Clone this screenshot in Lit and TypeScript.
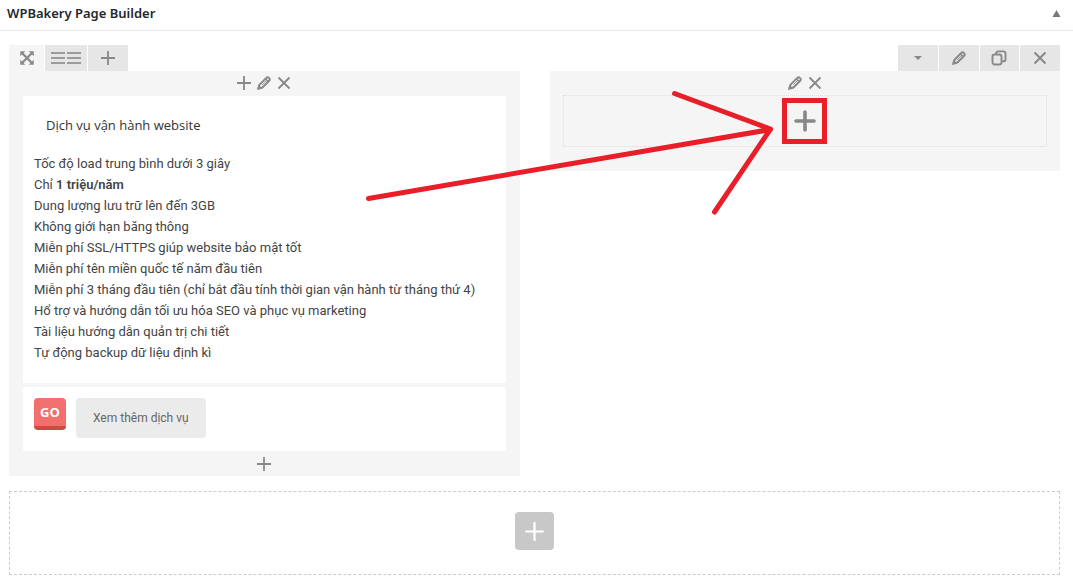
import { LitElement, html, css, svg } from "lit";
import { customElement } from "lit/decorators.js";

const plus = (size: number, stroke: number) => html`
  <svg width=${size} height=${size} viewBox="0 0 16 16" aria-hidden="true">
    <path d="M8 1v14M1 8h14" fill="none" stroke="currentColor" stroke-width=${stroke} />
  </svg>`;

const pencil = html`
  <svg width="16" height="16" viewBox="0 0 16 16" aria-hidden="true">
    <path d="M2.600 13.200l1-3.600L10.300 2.900a1.700 1.700 0 0 1 2.500 0l.4.4a1.700 1.700 0 0 1 0 2.500L6.400 12.500z" fill="none" stroke="currentColor" stroke-width="2" stroke-linejoin="round" />
    <path d="M6.200 9.800l4-4" stroke="currentColor" stroke-width="0.800" />
    <path d="M1 15l1.300-5.200 3.900 3.900z" fill="currentColor" />
    <path d="M9.300 3.700l3.200 3.200" stroke="currentColor" stroke-width="1.600" />
  </svg>`;

const cross = (size: number, stroke: number) => html`
  <svg width=${size} height=${size} viewBox="0 0 14 14" aria-hidden="true">
    <path d="M1.5 1.5l11 11M12.5 1.5l-11 11" fill="none" stroke="currentColor" stroke-width=${stroke} />
  </svg>`;

const move = html`
  <svg width="14" height="14" viewBox="0 0 14 14" aria-hidden="true">
    <path d="M2.500 2.500l9 9M11.500 2.500l-9 9" stroke="currentColor" stroke-width="2.200" />
    <path d="M.3.3h5L.3 5.300zM13.700.3v5l-5-5zM.3 13.700v-5l5 5zM13.700 13.700h-5l5-5z" fill="currentColor" />
  </svg>`;

const copy = html`
  <svg width="16" height="16" viewBox="0 0 16 16" fill="none" stroke="currentColor" stroke-width="1.9" aria-hidden="true">
    <rect x="1.500" y="4.500" width="9" height="10" rx="2.200" />
    <path d="M5.300 4V3.200A1.800 1.800 0 0 1 7.100 1.400H12.500A2 2 0 0 1 14.500 3.400V9.400A1.900 1.900 0 0 1 12.600 11.300H11" />
  </svg>`;

const layout = html`
  <svg width="30" height="14" viewBox="0 0 30 14" aria-hidden="true">
    ${[2, 7, 12].map((y) => svg`<path d="M0 ${y}h14M16 ${y}h14" stroke="#9b9b9b" stroke-width="1.800" />`)}
  </svg>`;

const features = [
  html`Tốc độ load trung bình dưới 3 giây`,
  html`Chỉ <strong>1 triệu/năm</strong>`,
  html`Dung lượng lưu trữ lên đến 3GB`,
  html`Không giới hạn băng thông`,
  html`Miễn phí SSL/HTTPS giúp website bảo mật tốt`,
  html`Miễn phí tên miền quốc tế năm đầu tiên`,
  html`Miễn phí 3 tháng đầu tiên (chỉ bắt đầu tính thời gian vận hành từ tháng thứ 4)`,
  html`Hổ trợ và hướng dẫn tối ưu hóa SEO và phục vụ marketing`,
  html`Tài liệu hướng dẫn quản trị chi tiết`,
  html`Tự động backup dữ liệu định kì`,
];

@customElement("app-root")
export class AppRoot extends LitElement {
  static styles = css`
    :host {
      display: block;
      background: #fff;
      color: #444;
      font: 13px/21px "Open Sans", "Noto Sans", sans-serif;
    }
    * { box-sizing: border-box; }
    button {
      display: flex;
      align-items: center;
      justify-content: center;
      margin: 0;
      padding: 0;
      border: 0;
      background: none;
      color: #888;
      font: inherit;
      cursor: pointer;
    }
    svg { display: block; flex: none; }
    .header {
      display: flex;
      align-items: center;
      justify-content: space-between;
      height: 31px;
      padding: 0 12px 4px 7px;
      border-bottom: 1px solid #e8e8e8;
    }
    .title {
      margin: 0;
      color: #23282d;
      font-family: "Noto Sans", sans-serif;
      font-size: 13px;
      font-weight: 600;
    }
    .toggle { color: #72777c; }
    .content { padding: 14px 13px 7px 9px; }
    .toolbar { display: flex; justify-content: space-between; height: 26px; }
    .tools { display: grid; gap: 1px; }
    .tools-left { grid-template-columns: 35px 42px 40px; }
    .tools-right { grid-template-columns: repeat(4, 1fr); width: 162px; }
    .tool { background: #e6e6e6; }
    .tool-flat { background: #f5f5f5; }
    .columns {
      display: grid;
      grid-template-columns: 1fr 1fr;
      align-items: start;
      gap: 30px;
    }
    .column { padding: 0 14px; background: #f5f5f5; }
    .controls {
      display: flex;
      align-items: center;
      justify-content: center;
      gap: 4px;
      height: 24px;
    }
    .controls-end { height: 25px; }
    .controls button { width: 16px; height: 16px; }
    .card { border-radius: 2px; background: #fff; }
    .text-card { margin-top: 1px; padding: 18px 11px 20px; }
    .card-title {
      margin: 0 12px 17px;
      color: #333;
      font-size: 13px;
      font-weight: 400;
      line-height: 22px;
    }
    .features {
      margin: 0;
      padding: 0;
      font-family: Roboto, "Noto Sans", sans-serif;
      list-style: none;
    }
    .features strong { font-weight: 600; }
    .button-card {
      display: flex;
      gap: 10px;
      margin-top: 4px;
      padding: 11px 11px 13px;
    }
    .go {
      width: 32px;
      height: 32px;
      border-radius: 4px;
      border-bottom: 4px solid #cf4944;
      background: #f1706d;
      color: #fff;
      font: 700 13px/28px "Open Sans", sans-serif;
      text-align: center;
    }
    .more {
      height: 40px;
      padding: 0 17px;
      border-radius: 4px;
      background: #ebebeb;
      color: #666;
      font-family: Roboto, "Noto Sans", sans-serif;
      font-size: 12px;
    }
    .empty-column { padding: 0 13px 24px; }
    .dropzone {
      position: relative;
      display: flex;
      align-items: center;
      justify-content: center;
      height: 52px;
      border: 1px dotted #ddd;
    }
    .annotation {
      position: absolute;
      top: -11px;
      left: calc(50% - 445px);
      pointer-events: none;
    }
    .add-row {
      display: flex;
      align-items: center;
      justify-content: center;
      height: 84px;
      margin-top: 15px;
      padding-bottom: 4px;
      border: 1px dashed #ccc;
    }
    .add-row-button {
      width: 39px;
      height: 38px;
      border-radius: 4px;
      background: #c8c8c8;
      color: #fff;
    }
  `;

  render() {
    return html`
      <header class="header">
        <h2 class="title">WPBakery Page Builder</h2>
        <button class="toggle" aria-label="Toggle panel">
          <svg width="9" height="7" viewBox="0 0 9 7"><path d="M4.500 0L8.500 7h-8z" fill="currentColor" /></svg>
        </button>
      </header>
      <main class="content">
        <div class="toolbar">
          <div class="tools tools-left">
            <button class="tool tool-flat" aria-label="Move row">${move}</button>
            <button class="tool" aria-label="Change layout">${layout}</button>
            <button class="tool" aria-label="Add column">${plus(16, 1.8)}</button>
          </div>
          <div class="tools tools-right">
            <button class="tool" aria-label="Toggle row">
              <svg width="8" height="4" viewBox="0 0 8 4"><path d="M0 0h8L4 4z" fill="currentColor" /></svg>
            </button>
            <button class="tool" aria-label="Edit row">${pencil}</button>
            <button class="tool" aria-label="Clone row">${copy}</button>
            <button class="tool" aria-label="Delete row">${cross(14, 2)}</button>
          </div>
        </div>
        <div class="columns">
          <section class="column">
            <div class="controls">
              <button aria-label="Prepend element">${plus(16, 1.8)}</button>
              <button aria-label="Edit column">${pencil}</button>
              <button aria-label="Delete column">${cross(14, 1.8)}</button>
            </div>
            <article class="card text-card">
              <h3 class="card-title">Dịch vụ vận hành website</h3>
              <ul class="features">${features.map((f) => html`<li>${f}</li>`)}</ul>
            </article>
            <article class="card button-card">
              <span class="go">GO</span>
              <button class="more">Xem thêm dịch vụ</button>
            </article>
            <div class="controls controls-end">
              <button aria-label="Append element">${plus(16, 1.8)}</button>
            </div>
          </section>
          <section class="column empty-column">
            <div class="controls">
              <button aria-label="Edit column">${pencil}</button>
              <button aria-label="Delete column">${cross(14, 1.8)}</button>
            </div>
            <div class="dropzone">
              <button aria-label="Add element">
                <svg width="22" height="22" viewBox="0 0 22 22">
                  <path d="M11 2v18M2 11h18" stroke="currentColor" stroke-width="3.600" stroke-linecap="round" />
                </svg>
              </button>
              <svg class="annotation" width="475" height="135" viewBox="0 0 475 135" fill="none" stroke="#e81e29" aria-hidden="true">
                <path d="M8.500 113.500L410.500 44.500M314.500 8.500L410.500 44L354.500 127" stroke-width="5" stroke-linecap="round" stroke-linejoin="round" />
                <rect x="424.500" y="15.500" width="40" height="41" stroke-width="5" />
              </svg>
            </div>
          </section>
        </div>
        <div class="add-row">
          <button class="add-row-button" aria-label="Add row">${plus(21, 1.700)}</button>
        </div>
      </main>
    `;
  }
}
